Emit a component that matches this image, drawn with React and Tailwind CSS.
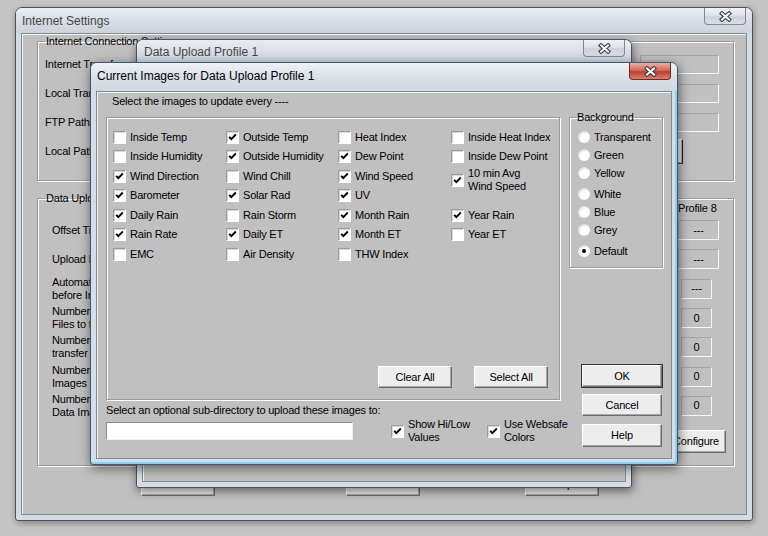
import React from 'react';

const rows = [
  [['Inside Temp', 0], ['Outside Temp', 1], ['Heat Index', 0], ['Inside Heat Index', 0]],
  [['Inside Humidity', 0], ['Outside Humidity', 1], ['Dew Point', 1], ['Inside Dew Point', 0]],
  [['Wind Direction', 1], ['Wind Chill', 0], ['Wind Speed', 1], ['10 min Avg|Wind Speed', 1]],
  [['Barometer', 1], ['Solar Rad', 1], ['UV', 1], null],
  [['Daily Rain', 1], ['Rain Storm', 0], ['Month Rain', 1], ['Year Rain', 1]],
  [['Rain Rate', 1], ['Daily ET', 1], ['Month ET', 1], ['Year ET', 0]],
  [['EMC', 0], ['Air Density', 0], ['THW Index', 0], null],
];

const colours = [
  ['Transparent', '', false],
  ['Green', '', false],
  ['Yellow', '', false],
  ['White', 'mt-[3px]', false],
  ['Blue', '', false],
  ['Grey', '', false],
  ['Default', 'mt-[3px]', true],
];

const uploadRows = [
  [['Offset Time'], '---', true],
  [['Upload Interval'], '---', true],
  [['Automatically connect', 'before Internet transfer'], '---', false],
  [['Number of Data', 'Files to transfer'], '0', false],
  [['Number of days to', 'transfer'], '0', false],
  [['Number of Graph', 'Images to transfer'], '0', false],
  [['Number of Custom', 'Data Images'], '0', false],
];

function CloseButton({ active }) {
  const tone = active
    ? 'border-[#6e2b22] bg-[linear-gradient(#eab0a4,#d46a59_45%,#bb3f2e_55%,#d9806f)]'
    : 'border-[#7f8a96] bg-[linear-gradient(#f1f3f6,#dde2e8_45%,#cbd2da_55%,#d9dee5)]';
  return (
    <div className={`flex h-[17px] w-[42px] items-center justify-center rounded-b-[4px] border border-t-0 ${tone}`}>
      <svg width="13" height="11" viewBox="0 0 13 11">
        <path d="M3 2.5 L10 8.5 M10 2.5 L3 8.5" stroke="#34404c" strokeWidth="4.2" strokeLinecap="square" />
        <path d="M3 2.5 L10 8.5 M10 2.5 L3 8.5" stroke="#fff" strokeWidth="2" strokeLinecap="square" />
      </svg>
    </div>
  );
}

function Check({ on }) {
  return (
    <span className="flex h-[13px] w-[13px] shrink-0 items-center justify-center border border-[#9a9a9a] border-b-white border-r-white bg-white shadow-[inset_1px_1px_0_#d8d8d8]">
      {on ? (
        <svg width="9" height="9" viewBox="0 0 9 9">
          <path d="M1.2 3.8 L3.3 6.2 L7.8 1.5" fill="none" stroke="#000" strokeWidth="1.9" />
        </svg>
      ) : null}
    </span>
  );
}

function Radio({ on }) {
  return (
    <span className="flex h-[12px] w-[12px] shrink-0 items-center justify-center rounded-full bg-[radial-gradient(circle_at_62%_62%,#ffffff_40%,#e2e2e2_70%,#9f9f9f)]">
      {on ? <span className="h-[4px] w-[4px] rounded-full bg-black" /> : null}
    </span>
  );
}

function Btn({ children, className = '', dflt }) {
  return (
    <div
      className={`flex items-center justify-center whitespace-nowrap border border-white border-b-[#6c6c6c] border-r-[#6c6c6c] bg-[#ededed] shadow-[inset_-1px_-1px_0_#a8a8a8] ${
        dflt ? 'outline outline-1 outline-[#333]' : ''
      } ${className}`}
    >
      {children}
    </div>
  );
}

function Field({ children, className = '' }) {
  return (
    <div className={`flex items-center justify-center border border-[#f6f6f6] border-l-[#a5a5a5] border-t-[#a5a5a5] ${className}`}>
      {children}
    </div>
  );
}

function Win({ className, title, active, titleH, titleTop, titlePl, children, shadow }) {
  return (
    <div
      className={`absolute flex flex-col rounded-t-[7px] rounded-b-[3px] border ${
        active ? 'border-[#3d5873] bg-[#d5dde6]' : 'border-[#4a545e] bg-[#d6dce3]'
      } ${shadow} ${className}`}
    >
      <div
        className={`flex shrink-0 items-start justify-between rounded-t-[6px] pr-[6px] ${titleH} ${
          active
            ? 'bg-[linear-gradient(#eef2f6,#dae1e9_50%,#d0d8e1)]'
            : 'bg-[linear-gradient(#e9edf1,#d8dee5_50%,#ccd3db)]'
        }`}
      >
        <span
          className={`text-[12px] leading-[14px] tracking-normal ${titleTop} ${titlePl} ${
            active ? 'text-black' : 'text-[#454545]'
          }`}
        >
          {title}
        </span>
        <CloseButton active={active} />
      </div>
      <div className="mx-[5px] mb-[5px] min-h-0 flex-1 border border-[#7d8a97] bg-[#c0c0c0] shadow-[inset_1px_1px_0_#f4f4f4]">
        {children}
      </div>
    </div>
  );
}

function InternetSettings() {
  return (
    <Win
      className="left-[15px] top-[7px] z-[1] h-[514px] w-[738px]"
      title="Internet Settings"
      titleH="h-[25px]"
      titleTop="mt-[6px]"
      titlePl="pl-[6px]"
      shadow="shadow-[1px_2px_6px_rgba(0,0,0,0.35)]"
    >
      <div className="flex flex-col pl-[15px] pr-[12px] pt-[1px]">
        <fieldset className="h-[146px] border border-[#9a9a9a] shadow-[1px_1px_0_#fff,inset_1px_1px_0_#fff]">
          <legend className="ml-[7px] px-[1px] leading-[13px]">Internet Connection Settings</legend>
          <div className="mt-[1.5px] flex flex-col pl-[7px] pr-[14px]">
            <div className="flex h-[29px] items-center justify-between">
              <span>Internet Transfer</span>
              <Field className="h-[19px] w-[79px]" />
            </div>
            <div className="flex h-[29px] items-center justify-between">
              <span>Local Transfer</span>
              <Field className="h-[19px] w-[79px]" />
            </div>
            <div className="flex h-[29px] items-center justify-between">
              <span>FTP Path</span>
              <Field className="h-[19px] w-[79px]" />
            </div>
            <div className="flex h-[29px] items-center justify-between">
              <span>Local Path</span>
              <Btn className="mr-[36px] h-[25px] w-[74px] border-b-[#444] border-r-[#222]">Browse...</Btn>
            </div>
          </div>
        </fieldset>
        <fieldset className="mt-[10.5px] h-[274px] border border-[#9a9a9a] shadow-[1px_1px_0_#fff,inset_1px_1px_0_#fff]">
          <legend className="ml-[7px] px-[1px] leading-[13px]">Data Upload</legend>
          <div className="flex flex-col pl-[14px] pr-[7px]">
            <div className="-mt-[3px] flex h-[14px] items-center justify-end">
              <span className="w-[60px] pl-[12px]">Profile 8</span>
            </div>
            {uploadRows.map(([label, value, wide], i) => (
              <div key={i} className="flex h-[29.3px] items-center justify-between">
                <div className="flex flex-col leading-[13px]">
                  {label.map((l) => (
                    <span key={l}>{l}</span>
                  ))}
                </div>
                <div className="flex w-[60px]">
                  <Field className={`h-[20px] ${wide ? 'ml-[12px] w-[41px]' : 'ml-[15px] w-[31px]'}`}>{value}</Field>
                </div>
              </div>
            ))}
            <div className="mt-[9.5px] flex justify-end">
              <Btn className="h-[23px] w-[60px]">Configure</Btn>
            </div>
          </div>
        </fieldset>
        <div className="mt-[6.5px] flex">
          <Btn className="ml-[104px] h-[24px] w-[74px]">OK</Btn>
          <Btn className="ml-[131px] h-[24px] w-[74px]">Cancel</Btn>
          <Btn className="ml-[105px] h-[24px] w-[74px]">Help</Btn>
        </div>
      </div>
    </Win>
  );
}

function ImagesDialog() {
  return (
    <Win
      className="left-[90px] top-[62px] z-[3] h-[403px] w-[588px]"
      title="Current Images for Data Upload Profile 1"
      active
      titleH="h-[28px]"
      titleTop="mt-[6px]"
      titlePl="pl-[6px]"
      shadow="shadow-[inset_-2px_-2px_0_#8fd0f2,1px_3px_12px_rgba(0,0,0,0.55)]"
    >
      <div className="flex pl-[9px] pt-[3px]">
        <div className="flex w-[454px] shrink-0 flex-col">
          <span className="h-[13px] pl-[6px] leading-[13px]">Select the images to update every ----</span>
          <div className="mt-[9px] flex h-[283px] flex-col border border-[#9a9a9a] shadow-[1px_1px_0_#fff,inset_1px_1px_0_#fff]">
            <div className="grid auto-rows-[19.5px] grid-cols-[113px_112px_113px_1fr] pl-[6px] pt-[9.25px]">
              {rows.flat().map((item, i) => {
                if (!item) return <div key={i} />;
                const [label, on] = item;
                if (label.includes('|')) {
                  return (
                    <div key={i} className="flex items-start gap-[4px]">
                      <span className="mt-[8px]">
                        <Check on={on} />
                      </span>
                      <span className="mt-[1px] flex flex-col leading-[13px]">
                        {label.split('|').map((l) => (
                          <span key={l}>{l}</span>
                        ))}
                      </span>
                    </div>
                  );
                }
                return (
                  <div key={i} className="flex items-center gap-[4px] whitespace-nowrap">
                    <Check on={on} />
                    <span>{label}</span>
                  </div>
                );
              })}
            </div>
            <div className="mt-auto flex justify-end gap-[22px] pb-[11px] pr-[11px]">
              <Btn className="h-[22px] w-[74px]">Clear All</Btn>
              <Btn className="h-[22px] w-[74px]">Select All</Btn>
            </div>
          </div>
          <span className="mt-[4px] h-[13px] whitespace-nowrap leading-[13px]">
            Select an optional sub-directory to upload these images to:
          </span>
          <div className="flex h-[28px] items-center">
            <div className="h-[18px] w-[247px] shrink-0 border border-[#8a8a8a] border-b-[#f0f0f0] border-r-[#f0f0f0] bg-white" />
            <div className="ml-[38px] flex w-[96px] shrink-0 items-center gap-[4px]">
              <Check on />
              <span className="flex flex-col whitespace-nowrap leading-[13.5px]">
                <span>Show Hi/Low</span>
                <span>Values</span>
              </span>
            </div>
            <div className="flex shrink-0 items-center gap-[4px]">
              <Check on />
              <span className="flex flex-col whitespace-nowrap leading-[13.5px]">
                <span>Use Websafe</span>
                <span>Colors</span>
              </span>
            </div>
          </div>
        </div>
        <div className="ml-[9px] flex w-[94px] shrink-0 flex-col">
          <fieldset className="mt-[15.5px] h-[157.5px] border border-[#9a9a9a] shadow-[1px_1px_0_#fff,inset_1px_1px_0_#fff]">
            <legend className="ml-[6px] px-[1px] leading-[13px]">Background</legend>
            <div className="mt-[4.5px] flex flex-col">
              {colours.map(([name, extra, on]) => (
                <div key={name} className={`flex h-[18px] items-center gap-[4px] pl-[8px] ${extra}`}>
                  <Radio on={on} />
                  <span>{name}</span>
                </div>
              ))}
            </div>
          </fieldset>
          <Btn dflt className="ml-[13px] mt-[97px] h-[22px] w-[80px]">OK</Btn>
          <Btn className="ml-[13px] mt-[7px] h-[22px] w-[80px]">Cancel</Btn>
          <Btn className="ml-[13px] mt-[8px] h-[23px] w-[80px]">Help</Btn>
        </div>
      </div>
    </Win>
  );
}

export default function App() {
  return (
    <div className="relative h-[536px] w-[768px] overflow-hidden bg-[#c5c5c5] font-['Liberation_Sans',Arial,sans-serif] text-[11px] leading-[13px] tracking-[-0.2px] text-black">
      <InternetSettings />
      <Win
        className="left-[136px] top-[39px] z-[2] h-[449px] w-[496px]"
        title="Data Upload Profile 1"
        titleH="h-[25px]"
        titleTop="mt-[5px]"
        titlePl="pl-[7px]"
        shadow="shadow-[1px_3px_10px_rgba(0,0,0,0.5)]"
      >
        <div />
      </Win>
      <ImagesDialog />
    </div>
  );
}
